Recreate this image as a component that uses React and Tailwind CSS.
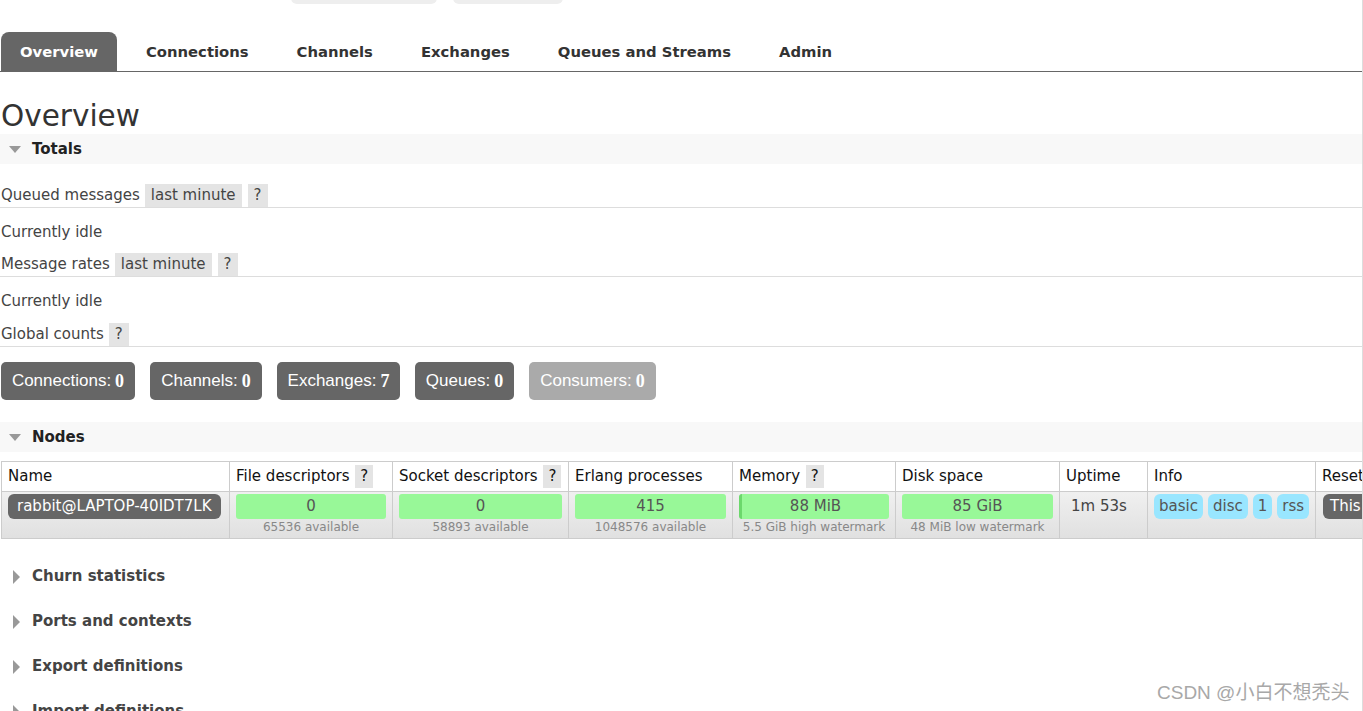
import React from "react";

const tabs = ["Overview", "Connections", "Channels", "Exchanges", "Queues and Streams", "Admin"];

const counts = [
  { label: "Connections:", value: 0, w: "w-[134px]" },
  { label: "Channels:", value: 0, w: "w-[112px]" },
  { label: "Exchanges:", value: 7, w: "w-[123px]" },
  { label: "Queues:", value: 0, w: "w-[99px]" },
  { label: "Consumers:", value: 0, w: "w-[127px]", faded: true },
];

const Chip = ({ children, className = "" }) => (
  <span className={`inline-block bg-[#e4e4e4] px-[6px] leading-[23px] ${className}`}>{children}</span>
);

const SectionHeader = ({ title }) => (
  <div className="flex items-center h-[30px] bg-[#f8f8f8]">
    <span className="ml-[9px] mr-[11px] w-0 h-0 border-l-[6px] border-r-[6px] border-t-[7px] border-l-transparent border-r-transparent border-t-[#999]" />
    <span className="font-bold text-[15px] text-[#222]">{title}</span>
  </div>
);

const Collapsed = ({ title }) => (
  <div className="flex items-center h-[45px]">
    <span className="ml-[13px] mr-[12px] w-0 h-0 border-t-[7px] border-b-[7px] border-l-[7px] border-t-transparent border-b-transparent border-l-[#999]" />
    <span className="font-bold text-[15px] text-[#444]">{title}</span>
  </div>
);

const Bar = ({ value, sub, mem }) => (
  <td className="border border-[#ccc] px-[6px] pt-[2px] pb-[3px] align-top">
    <div
      className={`h-[25px] rounded-[3px] bg-[#98f898] text-center leading-[25px] text-[#555] text-[15px] ${
        mem ? "border-l-[3px] border-[#6cd86c]" : ""
      }`}
    >
      {value}
    </div>
    <div className="text-center text-[12px] text-[#888] leading-[16px] whitespace-nowrap">{sub}</div>
  </td>
);

const Row = ({ label, chips, className = "" }) => (
  <div className={`flex h-[23px] box-content border-b border-[#ddd] ${className}`}>
    <span className="pl-[1px] mr-[5px] leading-[23px]">{label}</span>
    {chips.map((c, i) => (
      <Chip key={i} className="mr-[6px]">
        {c}
      </Chip>
    ))}
  </div>
);

export default function App() {
  return (
    <div
      className="relative w-[1363px] h-[711px] overflow-hidden bg-white text-[#444] border-r border-[#ddd]"
      style={{ fontFamily: '"DejaVu Sans", Verdana, sans-serif' }}
    >
      {/* clipped header pills */}
      <div className="flex h-[4px] overflow-hidden items-end">
        <div className="ml-[291px] w-[146px] h-[20px] bg-[#eee] rounded-b-[6px]" />
        <div className="ml-[16px] w-[110px] h-[20px] bg-[#eee] rounded-b-[6px]" />
      </div>

      {/* tabs */}
      <div className="mt-[28px] flex items-end gap-[10px] border-b border-[#666] pl-[1px]">
        {tabs.map((t, i) => (
          <div
            key={t}
            className={`h-[39px] px-[19px] pt-[1px] flex items-center font-bold text-[14.8px] rounded-t-[8px] ${
              i === 0 ? "bg-[#666] text-white" : "text-[#333]"
            }`}
          >
            {t}
          </div>
        ))}
      </div>

      <h1 className="mt-[26px] text-[29.5px] leading-[36px] text-[#333] pl-[1px]">Overview</h1>

      <SectionHeader title="Totals" />

      <div className="text-[15px]">
        <Row label="Queued messages" chips={["last minute", "?"]} className="mt-[20px]" />
        <div className="h-[24px] mt-[12px] pl-[1px] leading-[24px]">Currently idle</div>
        <Row label="Message rates" chips={["last minute", "?"]} className="mt-[9px]" />
        <div className="h-[24px] mt-[12px] pl-[1px] leading-[24px]">Currently idle</div>
        <Row label="Global counts" chips={["?"]} className="mt-[10px]" />
      </div>

      {/* counters */}
      <div className="mt-[15px] flex gap-[15px] pl-[1px]">
        {counts.map((c) => (
          <div
            key={c.label}
            className={`${c.w} h-[38px] rounded-[5px] flex items-center justify-center text-white text-[17px] ${
              c.faded ? "bg-[#aaa]" : "bg-[#666]"
            }`}
            style={{ fontFamily: '"Liberation Sans", Arial, sans-serif' }}
          >
            {c.label}
            <b className="ml-[4px] text-[18px]" style={{ fontFamily: '"Liberation Serif", serif' }}>
              {c.value}
            </b>
          </div>
        ))}
      </div>

      <div className="mt-[22px]">
        <SectionHeader title="Nodes" />
      </div>

      {/* nodes table */}
      <div className="mt-[9px] pl-[1px]">
        <table className="table-fixed border-collapse w-[1460px] text-[15px]">
          <colgroup>
            <col className="w-[228px]" />
            <col className="w-[163px]" />
            <col className="w-[176px]" />
            <col className="w-[164px]" />
            <col className="w-[163px]" />
            <col className="w-[164px]" />
            <col className="w-[88px]" />
            <col className="w-[168px]" />
            <col className="w-[146px]" />
          </colgroup>
          <thead>
            <tr className="h-[30px] text-[#111] text-left whitespace-nowrap">
              <th className="font-normal border border-[#ccc] px-[6px]">Name</th>
              <th className="font-normal border border-[#ccc] px-[6px]">
                File descriptors <Chip className="ml-[1px] !px-[5px]">?</Chip>
              </th>
              <th className="font-normal border border-[#ccc] px-[6px]">
                Socket descriptors <Chip className="ml-[1px] !px-[5px]">?</Chip>
              </th>
              <th className="font-normal border border-[#ccc] px-[6px]">Erlang processes</th>
              <th className="font-normal border border-[#ccc] px-[6px]">
                Memory <Chip className="ml-[1px] !px-[5px]">?</Chip>
              </th>
              <th className="font-normal border border-[#ccc] px-[6px]">Disk space</th>
              <th className="font-normal border border-[#ccc] px-[6px]">Uptime</th>
              <th className="font-normal border border-[#ccc] px-[6px]">Info</th>
              <th className="font-normal border border-[#ccc] px-[6px]">Reset stats</th>
            </tr>
          </thead>
          <tbody>
            <tr className="h-[46px] bg-gradient-to-b from-[#f0f0f0] to-[#e0e0e0]">
              <td className="border border-[#ccc] px-[6px] pt-[2px] align-top">
                <div className="inline-block h-[25px] leading-[25px] px-[9px] rounded-[6px] bg-[#666] text-white whitespace-nowrap">
                  rabbit@LAPTOP-40IDT7LK
                </div>
              </td>
              <Bar value="0" sub="65536 available" />
              <Bar value="0" sub="58893 available" />
              <Bar value="415" sub="1048576 available" />
              <Bar value="88 MiB" sub="5.5 GiB high watermark" mem />
              <Bar value="85 GiB" sub="48 MiB low watermark" />
              <td className="border border-[#ccc] px-[11px] pt-[2px] align-top leading-[25px] text-[#444] whitespace-nowrap">
                1m 53s
              </td>
              <td className="border border-[#ccc] px-[6px] pt-[2px] align-top">
                <div className="flex gap-[5px]">
                  {["basic", "disc", "1", "rss"].map((b) => (
                    <span key={b} className="h-[25px] leading-[25px] px-[5px] rounded-[6px] bg-[#99e6ff] text-[#555]">
                      {b}
                    </span>
                  ))}
                </div>
              </td>
              <td className="border border-[#ccc] px-[7px] pt-[2px] align-top">
                <div className="inline-block h-[25px] leading-[25px] px-[7px] rounded-[6px] bg-[#666] text-white whitespace-nowrap">
                  This node
                </div>
              </td>
            </tr>
          </tbody>
        </table>
      </div>

      <div className="mt-[15px]">
        <Collapsed title="Churn statistics" />
        <Collapsed title="Ports and contexts" />
        <Collapsed title="Export definitions" />
        <Collapsed title="Import definitions" />
      </div>

      <div
        className="absolute left-[1157px] top-[679px] text-[19px] text-[#a8a8a8]"
        style={{ fontFamily: '"Liberation Sans", "Noto Sans CJK SC", sans-serif' }}
      >
        CSDN @小白不想秃头
      </div>
    </div>
  );
}
